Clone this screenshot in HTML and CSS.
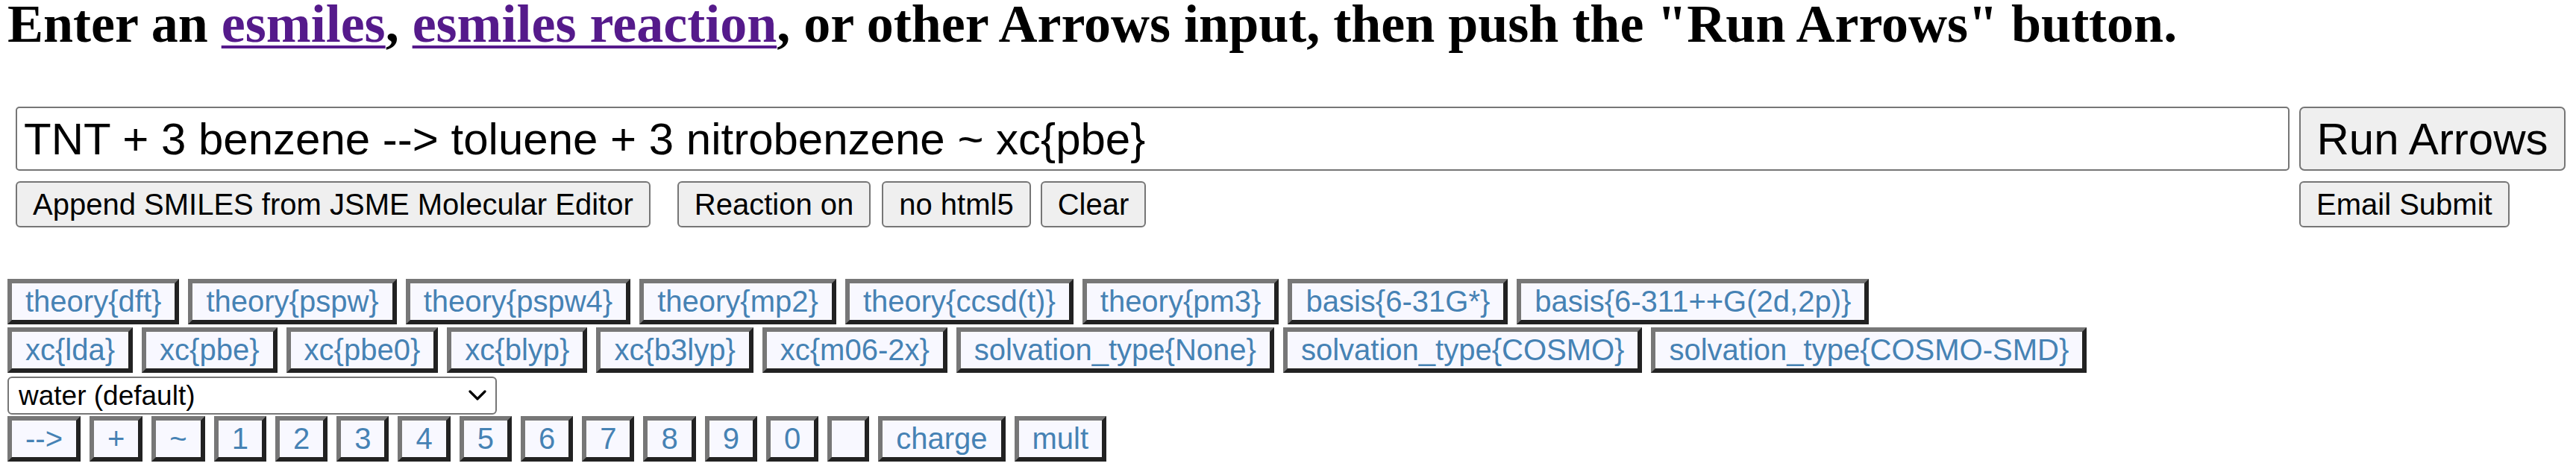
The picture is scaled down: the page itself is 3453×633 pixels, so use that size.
FILE: index.html
```html
<!DOCTYPE html>
<html lang="en">
<head>
<meta charset="utf-8">
<title>Arrows</title>
<link rel="stylesheet" href="styles.css">
</head>
<body>
<h1 class="title">Enter an <a class="visited" href="#esmiles">esmiles</a>, <a class="visited" href="#reaction">esmiles reaction</a>, or other Arrows input, then push the "Run Arrows" button.</h1>

<form class="query-form" onsubmit="return false;">
  <input class="query-input" type="text" value="TNT + 3 benzene --> toluene + 3 nitrobenzene ~ xc{pbe}">
  <button class="btn btn-run" type="button">Run Arrows</button>
  <div class="tool-buttons">
    <button class="btn btn-small" type="button">Append SMILES from JSME Molecular Editor</button>
    <button class="btn btn-small gap-wide" type="button">Reaction on</button>
    <button class="btn btn-small gap-mid" type="button">no html5</button>
    <button class="btn btn-small gap-narrow" type="button">Clear</button>
  </div>
  <div class="email-cell">
    <button class="btn btn-small" type="button">Email Submit</button>
  </div>
</form>

<div class="tags">
  <div class="tag-row">
    <span class="tag">theory{dft}</span>
    <span class="tag">theory{pspw}</span>
    <span class="tag">theory{pspw4}</span>
    <span class="tag">theory{mp2}</span>
    <span class="tag">theory{ccsd(t)}</span>
    <span class="tag">theory{pm3}</span>
    <span class="tag">basis{6-31G*}</span>
    <span class="tag">basis{6-311++G(2d,2p)}</span>
  </div>
  <div class="tag-row">
    <span class="tag">xc{lda}</span>
    <span class="tag">xc{pbe}</span>
    <span class="tag">xc{pbe0}</span>
    <span class="tag">xc{blyp}</span>
    <span class="tag">xc{b3lyp}</span>
    <span class="tag">xc{m06-2x}</span>
    <span class="tag">solvation_type{None}</span>
    <span class="tag">solvation_type{COSMO}</span>
    <span class="tag">solvation_type{COSMO-SMD}</span>
  </div>
  <div class="select-wrap">
    <select class="solvent">
      <option>water (default)</option>
      <option>acetone</option>
      <option>benzene</option>
      <option>methanol</option>
    </select>
    <svg class="chevron" viewBox="0 0 24 14" width="24" height="14" aria-hidden="true"><path d="M2 2 L12 12 L22 2" fill="none" stroke="#000" stroke-width="3.2" stroke-linecap="round" stroke-linejoin="round"/></svg>
  </div>
  <div class="tag-row">
    <span class="tag">--&gt;</span>
    <span class="tag">+</span>
    <span class="tag">~</span>
    <span class="tag">1</span>
    <span class="tag">2</span>
    <span class="tag">3</span>
    <span class="tag">4</span>
    <span class="tag">5</span>
    <span class="tag">6</span>
    <span class="tag">7</span>
    <span class="tag">8</span>
    <span class="tag">9</span>
    <span class="tag">0</span>
    <span class="tag tag-empty">&nbsp;</span>
    <span class="tag">charge</span>
    <span class="tag">mult</span>
  </div>
</div>
</body>
</html>
```

FILE: styles.css
```css
html, body {
  margin: 0;
  padding: 0;
  background: #ffffff;
}

body {
  font-family: "Liberation Serif", "Times New Roman", serif;
  color: #000;
}

.title {
  margin: 0;
  padding-left: 10px;
  font-family: "Liberation Serif", "Times New Roman", serif;
  font-weight: bold;
  font-size: 72px;
  line-height: 64px;
  white-space: nowrap;
}

.title a.visited {
  color: #551a8b;
  text-decoration: underline;
  text-decoration-thickness: 4px;
  text-underline-offset: 5px;
}

.query-form {
  margin: 79px 0 0 0;
  padding-left: 21px;
  display: grid;
  grid-template-columns: 3048px 357px;
  grid-template-rows: 86px 62px;
  column-gap: 13px;
  row-gap: 14px;
}

.query-input {
  box-sizing: border-box;
  height: 86px;
  width: 100%;
  margin: 0;
  padding: 0 9px;
  border: 2px solid #767676;
  border-radius: 5px;
  font-family: "Liberation Sans", Arial, sans-serif;
  font-size: 60px;
  color: #000;
  background: #fff;
  outline: none;
}

.btn {
  box-sizing: border-box;
  margin: 0;
  border: 2px solid #767676;
  background: #efefef;
  color: #000;
  font-family: "Liberation Sans", Arial, sans-serif;
  cursor: pointer;
}

.btn-run {
  height: 86px;
  width: 357px;
  border-radius: 7px;
  font-size: 60px;
  padding: 0;
}

.tool-buttons {
  display: flex;
  align-items: flex-start;
}

.btn-small {
  height: 62px;
  border-radius: 6px;
  font-size: 40px;
  padding: 0 21px;
  white-space: nowrap;
}

.gap-wide { margin-left: 36px; }
.gap-mid { margin-left: 15px; }
.gap-narrow { margin-left: 13px; }

.email-cell {
  display: flex;
  align-items: flex-start;
}

.tags {
  margin-top: 69px;
  padding-left: 10px;
  display: flex;
  flex-direction: column;
  align-items: flex-start;
  row-gap: 4px;
}

.tag-row {
  display: flex;
  column-gap: 12px;
}

.tag {
  box-sizing: border-box;
  display: inline-block;
  height: 61px;
  line-height: 49px;
  padding: 0 18px;
  border-style: solid;
  border-width: 6px;
  border-color: #777777 #222222 #222222 #777777;
  background: #f8f8ff;
  color: #4682b4;
  font-family: "Liberation Sans", Arial, sans-serif;
  font-size: 40px;
  white-space: nowrap;
}

.tag-empty {
  width: 56px;
}

.select-wrap {
  position: relative;
  display: inline-block;
  margin: 1px 0 -2px 0;
}

.solvent {
  box-sizing: border-box;
  appearance: none;
  -webkit-appearance: none;
  width: 656px;
  height: 51px;
  margin: 0;
  padding: 0 0 0 13px;
  border: 2px solid #767676;
  border-radius: 6px;
  background: #fff;
  color: #000;
  font-family: "Liberation Sans", Arial, sans-serif;
  font-size: 37px;
}

.chevron {
  position: absolute;
  right: 14px;
  top: 18px;
  pointer-events: none;
}
```
